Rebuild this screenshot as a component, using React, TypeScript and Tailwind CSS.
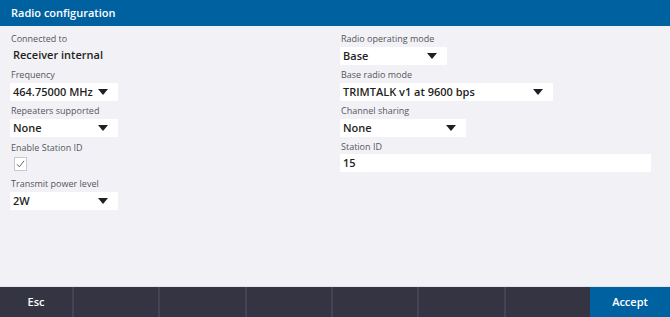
import React from 'react';

const Caret = () => (
  <svg width="10" height="6" viewBox="0 0 10 6" className="shrink-0">
    <path d="M0 0 L10 0 L5 6 Z" fill="#1f1f24" />
  </svg>
);

const Label = ({ children }: { children: React.ReactNode }) => (
  <div className="h-[14px] whitespace-nowrap pl-px text-[9px] leading-[14px] text-[#55555c]">{children}</div>
);

const Select = ({ value, width }: { value: string; width: string }) => (
  <div className={`mt-px flex h-[18px] items-center justify-between bg-white pl-[3px] pr-[10px] ${width}`}>
    <span className="whitespace-nowrap text-[11px] font-semibold text-[#1f1f24]">{value}</span>
    <Caret />
  </div>
);

const App: React.FC = () => {
  return (
    <div className="flex h-[317px] w-[670px] flex-col bg-[#f2f2f6] font-['Open_Sans',sans-serif]">
      <div className="flex h-[26px] items-center bg-[#0061a1] px-[11px] text-[11px] font-semibold text-white">
        Radio configuration
      </div>

      <div className="flex flex-1 pt-[6px]">
        {/* left column */}
        <div className="flex w-[340px] flex-col pl-[10px]">
          <Label>Connected to</Label>
          <div className="h-[18px] pl-[3px] text-[11px] font-semibold leading-[18px] text-[#1f1f24]">Receiver internal</div>
          <div className="mt-[4px]">
            <Label>Frequency</Label>
            <Select value="464.75000 MHz" width="w-[108px]" />
          </div>
          <div className="mt-[3px]">
            <Label>Repeaters supported</Label>
            <Select value="None" width="w-[108px]" />
          </div>
          <div className="mt-[4px]">
            <Label>Enable Station ID</Label>
            <div className="ml-[4px] mt-[2px] flex h-[14px] w-[13px] items-center justify-center border border-[#c8c8cf] bg-white">
              <svg width="9" height="8" viewBox="0 0 9 8">
                <path d="M1 4.2 L3.4 6.8 L8 0.8" fill="none" stroke="#555" strokeWidth="0.9" />
              </svg>
            </div>
          </div>
          <div className="mt-[6px]">
            <Label>Transmit power level</Label>
            <Select value="2W" width="w-[108px]" />
          </div>
        </div>

        {/* right column */}
        <div className="flex flex-1 flex-col">
          <Label>Radio operating mode</Label>
          <Select value="Base" width="w-[107px]" />
          <div className="mt-[3px]">
            <Label>Base radio mode</Label>
            <Select value="TRIMTALK v1 at 9600 bps" width="w-[213px]" />
          </div>
          <div className="mt-[3px]">
            <Label>Channel sharing</Label>
            <Select value="None" width="w-[126px]" />
          </div>
          <div className="mt-[3px]">
            <Label>Station ID</Label>
            <div className="flex h-[18px] w-[311px] items-center bg-white pl-[3px] text-[11px] font-semibold text-[#1f1f24]">
              15
            </div>
          </div>
        </div>
      </div>

      <div className="h-px bg-[#e4e4ea]" />
      <div className="grid h-[30px] grid-cols-[72px_repeat(6,1fr)_80px] bg-[#353443] text-[11px] font-semibold text-white">
        <div className="flex items-center justify-center">Esc</div>
        <div className="border-l-2 border-[#454454]" />
        <div className="border-l-2 border-[#454454]" />
        <div className="border-l-2 border-[#454454]" />
        <div className="border-l-2 border-[#454454]" />
        <div className="border-l-2 border-[#454454]" />
        <div className="border-l-2 border-[#454454]" />
        <div className="flex items-center justify-center bg-[#0061a1]">Accept</div>
      </div>
    </div>
  );
};

export default App;
